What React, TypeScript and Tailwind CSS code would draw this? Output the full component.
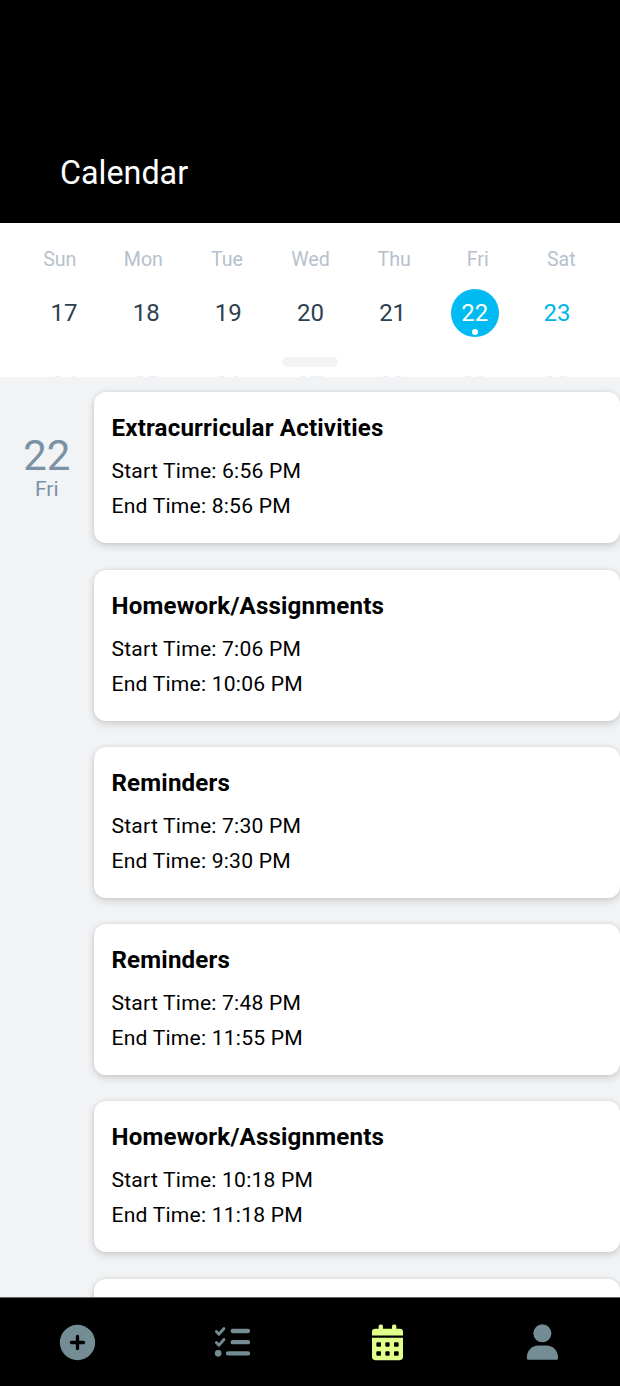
import React from "react";

const weekdays = ["Sun", "Mon", "Tue", "Wed", "Thu", "Fri", "Sat"];
const days = [17, 18, 19, 20, 21, 22, 23];
const nextDays = [24, 25, 26, 27, 28, 29, 30];

const events = [
  { title: "Extracurricular Activities", start: "6:56 PM", end: "8:56 PM" },
  { title: "Homework/Assignments", start: "7:06 PM", end: "10:06 PM" },
  { title: "Reminders", start: "7:30 PM", end: "9:30 PM" },
  { title: "Reminders", start: "7:48 PM", end: "11:55 PM" },
  { title: "Homework/Assignments", start: "10:18 PM", end: "11:18 PM" },
];

function AddIcon() {
  return (
    <svg viewBox="-82.5 -82.5 165 165" className="size-[55px]">
      <circle r="53" fill="currentColor" />
      <path d="M-18 0H18M0-18V18" stroke="#000" strokeWidth="10" strokeLinecap="round" />
    </svg>
  );
}

function TasksIcon() {
  return (
    <svg viewBox="0 -1.5 165 165" className="size-[55px]" fill="none" stroke="currentColor" strokeLinecap="round" strokeLinejoin="round">
      <path d="M34 48L42 56L57 39M34 81L42 89L57 72" strokeWidth="8.5" />
      <path d="M83 46.5H129M83 80H129M69 113.5H129" strokeWidth="13" />
      <circle cx="39.5" cy="113.5" r="10" fill="currentColor" stroke="none" />
    </svg>
  );
}

function CalendarIcon() {
  return (
    <svg viewBox="60 73.5 165 165" className="size-[55px]" fill="currentColor">
      <rect x="116" y="102" width="13" height="20" rx="5" />
      <rect x="156" y="102" width="13" height="20" rx="5" />
      <path d="M96 135V125Q96 115 106 115H179Q189 115 189 125V135Z" />
      <path
        fillRule="evenodd"
        d="M96 142H189V199Q189 209 179 209H106Q96 209 96 199ZM112 155Q109 155 109 158V166Q109 169 112 169H120Q123 169 123 166V158Q123 155 120 155ZM139 155Q136 155 136 158V166Q136 169 139 169H146Q149 169 149 166V158Q149 155 146 155ZM165 155Q162 155 162 158V166Q162 169 165 169H173Q176 169 176 166V158Q176 155 173 155ZM112 182Q109 182 109 185V193Q109 196 112 196H120Q123 196 123 193V185Q123 182 120 182ZM139 182Q136 182 136 185V193Q136 196 139 196H146Q149 196 149 193V185Q149 182 146 182ZM165 182Q162 182 162 185V193Q162 196 165 196H173Q176 196 176 193V185Q176 182 173 182Z"
      />
    </svg>
  );
}

function ProfileIcon() {
  return (
    <svg viewBox="0 -1.5 165 165" className="size-[55px]" fill="currentColor">
      <circle cx="82" cy="53.5" r="27" />
      <path d="M70 90H94C115 90 129 105 129 126V128Q129 133 124 133H40Q35.500 133 35.500 128V126C35.500 105 50 90 70 90Z" />
    </svg>
  );
}

function DayCell({ day }: { day: number }) {
  if (day === 22) {
    return (
      <div className="relative flex size-12 items-center justify-center rounded-full bg-[#00bbf2] text-white">
        {day}
        <span className="absolute bottom-0.5 left-[21px] size-1.5 rounded-full bg-white" />
      </div>
    );
  }
  return (
    <div className={"flex size-12 items-center justify-center " + (day === 23 ? "text-[#00b4ea]" : "text-[#2d4150]")}>
      {day}
    </div>
  );
}

function WeekStrip() {
  return (
    <section className="flex h-[154px] shrink-0 flex-col bg-white">
      <div className="mt-[27px] flex h-5 pl-[18px] pr-[17px] text-[19.6px] leading-5 text-[#b6c1cd]">
        {weekdays.map((d) => (
          <div key={d} className="flex-1 text-center">{d}</div>
        ))}
      </div>
      <div className="mt-[19px] flex h-12 justify-between pl-[40px] pr-[39px] text-[24px]">
        {days.map((d) => <DayCell key={d} day={d} />)}
      </div>
      <div className="mx-auto mt-5 h-2.5 w-14 shrink-0 rounded-[5px] bg-[#f2f4f5]" />
      <div className="mt-[9px] flex h-px shrink-0 justify-between overflow-hidden px-10 text-[24px] leading-[19px] text-[#2d4150] opacity-[0.08]">
        {nextDays.map((d) => <span key={d} className="w-12 text-center">{d}</span>)}
      </div>
    </section>
  );
}

function EventCard({ title, start, end }: { title: string; start: string; end: string }) {
  return (
    <article className="h-[151px] shrink-0 rounded-[12px] bg-white pl-[18px] pt-[21px] text-[21.1px] tracking-[0.21px] text-black shadow-[0_3px_8px_rgba(0,0,0,0.15),0_0_4px_rgba(0,0,0,0.08)]">
      <h2 className="text-[24.1px] font-bold leading-[30px] tracking-[0.18px]">{title}</h2>
      <p className="mt-[10px] leading-[35px]">Start Time: {start}</p>
      <p className="leading-[35px]">End Time: {end}</p>
    </article>
  );
}

export default function App() {
  return (
    <div className="flex h-[1386px] w-[620px] flex-col overflow-hidden bg-[#f2f3f5] font-['Roboto',sans-serif]">
      <header className="flex h-[223px] shrink-0 items-end bg-black pb-[30px] pl-[60px]">
        <h1 className="text-[32.3px] leading-10 text-white">Calendar</h1>
      </header>
      <WeekStrip />
      <main className="flex min-h-0 flex-1 overflow-hidden">
        <aside className="w-[93.5px] shrink-0 pt-[56px] text-center text-[#7a92a5]">
          <div className="text-[42px] leading-[46px]">22</div>
          <div className="text-[21px] leading-5">Fri</div>
        </aside>
        <div className="flex flex-1 flex-col gap-[26.3px] pt-[15.3px]">
          {events.map((e, i) => <EventCard key={i} {...e} />)}
          <div className="h-[151px] shrink-0 rounded-[12px] bg-white shadow-[0_3px_8px_rgba(0,0,0,0.15),0_0_4px_rgba(0,0,0,0.08)]" />
        </div>
      </main>
      <nav className="grid h-[89px] shrink-0 grid-cols-4 items-center justify-items-center border-t border-[#666] bg-black text-[#748c94]">
        <AddIcon />
        <TasksIcon />
        <div className="text-[#e1ff8b]"><CalendarIcon /></div>
        <ProfileIcon />
      </nav>
    </div>
  );
}
